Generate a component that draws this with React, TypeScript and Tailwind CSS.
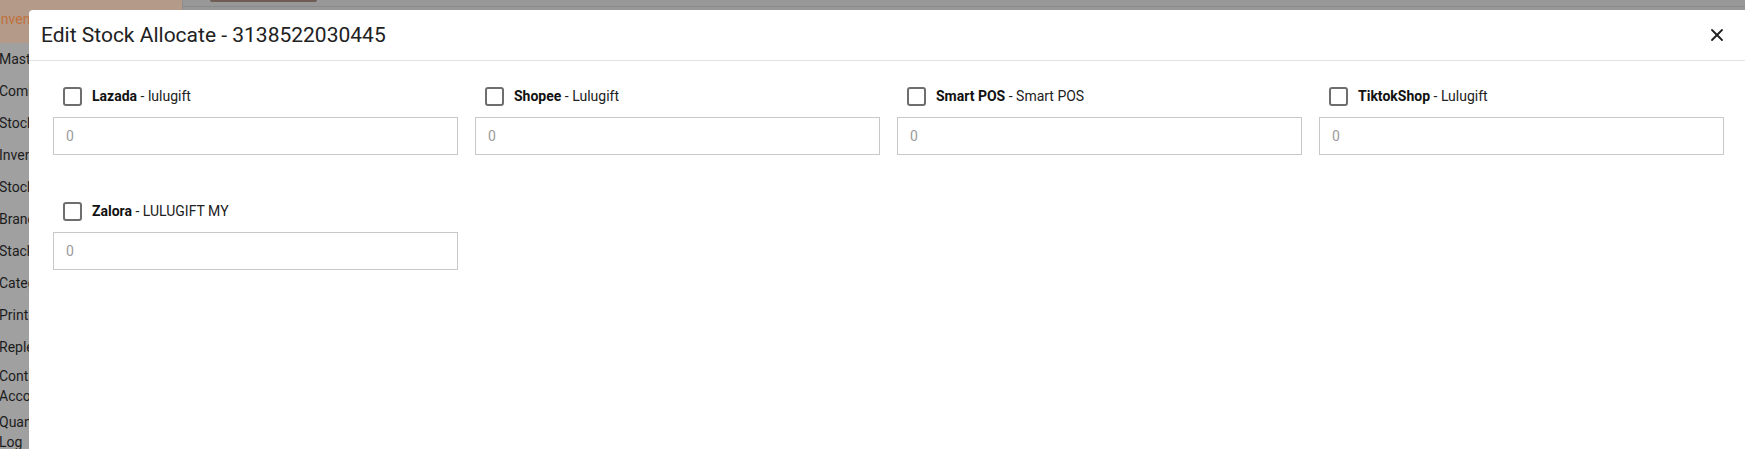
import React from "react";
import { X } from "lucide-react";

const menu: string[][] = [
  ["Master Product"],
  ["Combo Product"],
  ["Stock In"],
  ["Inventory List"],
  ["Stock Take"],
  ["Branch Transfer"],
  ["Stack Location"],
  ["Category"],
  ["Print Barcode"],
  ["Replenishment"],
  ["Control", "Account"],
  ["Quantity Change", "Log"],
];

const channels = [
  { name: "Lazada", shop: "lulugift" },
  { name: "Shopee", shop: "Lulugift" },
  { name: "Smart POS", shop: "Smart POS" },
  { name: "TiktokShop", shop: "Lulugift" },
  { name: "Zalora", shop: "LULUGIFT MY" },
];

function Backdrop() {
  return (
    <div className="flex h-full">
      <aside className="w-[183px] shrink-0 bg-[#a0a0a0] border-r border-[#8e8e8e] text-[14px] text-[#1c1c1c]">
        <div className="h-[43px] bg-[#b39a89] text-[#c2713d] flex items-center -ml-[3px] pb-[4px]">
          Inventory
        </div>
        {menu.map((lines) => (
          <div
            key={lines.join(" ")}
            className={`-ml-[1px] flex flex-col justify-center leading-[20px] whitespace-nowrap ${
              lines.length > 1 ? "h-[46px]" : "h-[32px]"
            }`}
          >
            {lines.map((l) => (
              <span key={l}>{l}</span>
            ))}
          </div>
        ))}
      </aside>
      <main className="flex-1 bg-[#989898]">
        <div className="h-[7px] border-b border-[#8a8a8a] pl-[27px]">
          <div className="w-[107px] h-[2px] rounded-b bg-[#6f5d55]" />
        </div>
      </main>
    </div>
  );
}

function ChannelField({ name, shop }: { name: string; shop: string }) {
  return (
    <div>
      <label className="flex items-center h-[20px] pl-[10px] gap-[10px] text-[14px] text-[#212121] cursor-pointer">
        <span className="w-[19px] h-[19px] border-2 border-[#6e6e6e] rounded-[3px] shrink-0" />
        <span>
          <span className="font-bold text-[#111]">{name}</span> - {shop}
        </span>
      </label>
      <input
        type="text"
        placeholder="0"
        className="mt-[11px] w-full h-[38px] border border-[#c9c9c9] px-[12px] text-[14px] placeholder:text-[#9b9b9b] outline-none"
      />
    </div>
  );
}

export default function App() {
  return (
    <div className="relative h-[449px] overflow-hidden font-['Roboto','Liberation_Sans',sans-serif]">
      <Backdrop />

      {/* Modal */}
      <div className="absolute left-[29px] top-[10px] right-0 bottom-0 bg-white rounded-tl-[4px]">
        <div className="h-[51px] flex items-center justify-between border-b border-[#e2e2e2] pl-[12px] pr-[18px]">
          <h2 className="text-[21px] text-[#212121] leading-none">Edit Stock Allocate - 3138522030445</h2>
          <button aria-label="Close" className="text-[#212121]">
            <X className="w-[20px] h-[20px]" strokeWidth={2.2} />
          </button>
        </div>
        <div className="pt-[25px] pl-[24px] pr-[21px] grid grid-cols-4 gap-x-[17px] gap-y-[46px]">
          {channels.map((c) => (
            <ChannelField key={c.name} name={c.name} shop={c.shop} />
          ))}
        </div>
      </div>
    </div>
  );
}
